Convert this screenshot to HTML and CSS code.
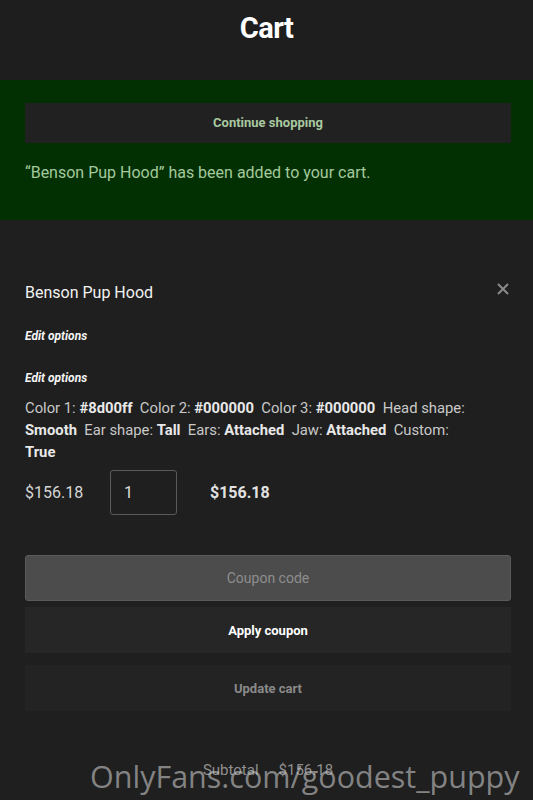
FILE: index.html
```html
<!DOCTYPE html>
<html lang="en">
<head>
    <meta charset="UTF-8" />
    <title>Cart</title>
    <meta name="viewport" content="width=device-width, initial-scale=1.0" />
    <link rel="stylesheet" href="styles.css">
</head>
<body>

<header class="page-header">
    <h1>Cart</h1>
</header>

<div class="notice">
    <a class="notice-btn" href="#">Continue shopping</a>
    <p>“Benson Pup Hood” has been added to your cart.</p>
</div>

<main class="cart">
    <div class="item">
        <div class="item-head">
            <span class="item-name">Benson Pup Hood</span>
            <a class="remove" href="#" aria-label="Remove">
                <svg width="12" height="12" viewBox="0 0 12 12"><path d="M1 1L11 11M11 1L1 11" stroke="currentColor" stroke-width="2"/></svg>
            </a>
        </div>
        <a class="edit" href="#">Edit options</a>
        <a class="edit" href="#">Edit options</a>
        <p class="meta">
            Color 1: <b>#8d00ff</b>&nbsp; Color 2: <b>#000000</b>&nbsp; Color 3: <b>#000000</b>&nbsp; Head shape: <b>Smooth</b>&nbsp; Ear shape: <b>Tall</b>&nbsp; Ears: <b>Attached</b>&nbsp; Jaw: <b>Attached</b>&nbsp; Custom: <b>True</b>
        </p>
        <div class="price-row">
            <span class="price">$156.18</span>
            <input class="qty" type="text" value="1">
            <span class="line-total">$156.18</span>
        </div>
    </div>

    <div class="actions">
        <input class="coupon" type="text" placeholder="Coupon code">
        <button class="btn apply">Apply coupon</button>
        <button class="btn update">Update cart</button>
    </div>

    <div class="totals">
        <span>Subtotal</span>
        <span>$156.18</span>
    </div>
</main>

<div class="watermark">OnlyFans.com/goodest_puppy</div>

</body>
</html>
```

FILE: styles.css
```css
body {
  margin: 0;
  font-family: Roboto, "Liberation Sans", sans-serif;
  background-color: #1f1f1f;
  color: #ddd;
  height: 800px;
  overflow: hidden;
}
.page-header {
  height: 80px;
  background: #1e1e1e;
  display: flex;
  justify-content: center;
}
.page-header h1 {
  margin: 11px 0 0;
  font-size: 29px;
  font-weight: bold;
  color: #fff;
  letter-spacing: -0.5px;
}
.notice {
  background: #033003;
  padding: 23px 22px 38px 25px;
}
.notice-btn {
  display: block;
  height: 40px;
  line-height: 40px;
  background: #212121;
  color: #a9c9a0;
  text-align: center;
  font-size: 13px;
  font-weight: bold;
  text-decoration: none;
}
.notice p {
  margin: 20px 0 0;
  font-size: 16px;
  color: #a4c99c;
}
.cart {
  padding: 63px 22px 0 25px;
}
.item-head {
  display: flex;
  justify-content: space-between;
  align-items: center;
}
.item-name {
  font-size: 16px;
  color: #f2f2f2;
}
.remove {
  color: #8a8a8a;
  margin: -8px 2px 0 0;
  display: flex;
}
.edit {
  display: block;
  margin-top: 27px;
  font-size: 12px;
  font-weight: bold;
  font-style: italic;
  color: #f4f4f4;
  text-decoration: none;
}
.edit + .edit {
  margin-top: 28px;
}
.meta {
  margin: 12px 0 0;
  font-size: 14.8px;
  line-height: 22px;
  color: #c9c9c9;
  padding-right: 30px;
}
.meta b {
  color: #e8e8e8;
}
.price-row {
  display: flex;
  align-items: center;
  margin-top: 7px;
  font-size: 16px;
}
.price {
  width: 85px;
  color: #d6d6d6;
}
.qty {
  width: 52px;
  height: 43px;
  padding: 0 0 0 13px;
  background: transparent;
  border: 1px solid #5a5a5a;
  border-radius: 3px;
  color: #ddd;
  font-family: inherit;
  font-size: 16px;
}
.line-total {
  margin-left: 33px;
  font-weight: bold;
  color: #e2e2e2;
}
.actions {
  margin-top: 40px;
  display: flex;
  flex-direction: column;
  gap: 6px;
}
.coupon {
  box-sizing: border-box;
  height: 46px;
  background: #4c4c4c;
  border: 1px solid #5a5a5a;
  border-radius: 3px;
  text-align: center;
  font-family: inherit;
  font-size: 14px;
  color: #ddd;
}
.coupon::placeholder {
  color: #8e8e8e;
}
.btn {
  height: 46px;
  border: none;
  font-family: inherit;
  font-size: 13px;
  font-weight: bold;
}
.apply {
  background: #262626;
  color: #fff;
}
.update {
  margin-top: 6px;
  background: #232323;
  color: #8a8a8a;
}
.totals {
  margin-top: 50px;
  display: flex;
  justify-content: center;
  gap: 20px;
  font-size: 15px;
  color: #8f8f8f;
}
.watermark {
  position: absolute;
  left: 90px;
  top: 755px;
  font-family: "Open Sans", sans-serif;
  font-size: 30.5px;
  color: rgba(200, 200, 200, 0.6);
  white-space: nowrap;
}
```
